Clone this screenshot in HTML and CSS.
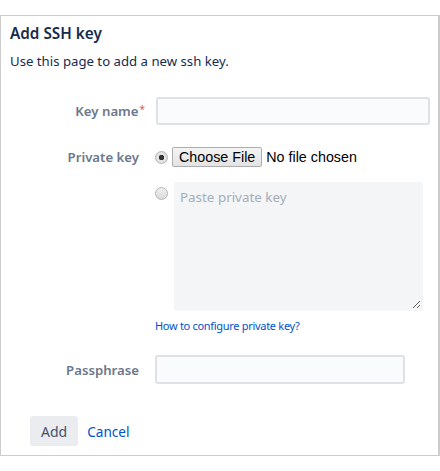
FILE: index.html
```html
<!DOCTYPE html>
<html lang="en">
<head>
  <meta charset="UTF-8">
  <title>Add SSH key</title>
  <link rel="stylesheet" href="styles.css">
</head>
<body>
<div class="panel">
  <h1 class="title">Add SSH key</h1>
  <p class="intro">Use this page to add a new ssh key.</p>
  <form class="ssh-form">
    <div class="row row-name">
      <label class="label" for="keyName">Key name<span class="req">*</span></label>
      <input class="text text-wide" id="keyName" type="text">
    </div>
    <div class="row row-file">
      <span class="label">Private key</span>
      <div class="choice">
        <input class="radio" type="radio" name="src" checked>
        <input class="file" type="file">
      </div>
    </div>
    <div class="row row-paste">
      <span></span>
      <div class="choice choice-paste">
        <input class="radio" type="radio" name="src">
        <textarea class="paste" placeholder="Paste private key"></textarea>
      </div>
    </div>
    <div class="row row-help">
      <span></span>
      <a class="help" href="#">How to configure private key?</a>
    </div>
    <div class="row row-pass">
      <label class="label" for="pass">Passphrase</label>
      <input class="text text-short" id="pass" type="password">
    </div>
    <div class="actions">
      <button class="btn" type="button">Add</button>
      <a class="cancel" href="#">Cancel</a>
    </div>
  </form>
</div>
</body>
</html>
```
FILE: styles.css
```css
body {
  margin: 0;
  padding-top: 15px;
  font-family: 'Noto Sans', sans-serif;
  color: #172b4d;
  background: #fff;
}
.panel {
  width: 440px;
  box-sizing: border-box;
  border: 1px solid #ccc;
  border-right-width: 2px;
  padding: 7px 10px 9px 9px;
}
.title {
  margin: 0;
  font-size: 15.3px;
  line-height: 20px;
  font-weight: 600;
}
.intro {
  margin: 8px 0 0;
  font-size: 13.2px;
  line-height: 20px;
}
.ssh-form {
  margin-top: 26px;
}
.row {
  display: grid;
  grid-template-columns: 135px 1fr;
  column-gap: 10px;
  align-items: center;
}
.label {
  text-align: right;
  padding-right: 6px;
  font-size: 13.2px;
  font-weight: 600;
  color: #6b778c;
}
.req {
  color: #e0613f;
  font-size: 10px;
  font-weight: 400;
  vertical-align: top;
  margin-right: -6px;
  margin-left: 1px;
}
.text {
  box-sizing: border-box;
  height: 28px;
  border: 2px solid #dfe1e6;
  border-radius: 3px;
  background: #fafbfc;
  font: inherit;
  font-size: 14px;
  padding: 0 6px;
}
.text-wide {
  width: 274px;
  margin-left: 1px;
}
.text-short {
  width: 250px;
  height: 29px;
}
.row-file {
  margin-top: 22px;
}
.row-paste {
  margin-top: 15px;
  align-items: start;
}
.row-help {
  margin-top: 7px;
}
.row-pass {
  margin-top: 21px;
}
.choice {
  display: flex;
  align-items: center;
  gap: 4px;
}
.choice-paste {
  align-items: flex-start;
}
.radio {
  appearance: none;
  width: 13px;
  height: 13px;
  margin: 0;
  border: 1px solid #b5b5b5;
  border-radius: 50%;
  background: linear-gradient(#f0f0f0, #dadada);
  box-sizing: border-box;
  flex-shrink: 0;
}
.radio:checked {
  background: radial-gradient(circle, #333 0, #333 2.5px, #e4e4e4 3px, #dcdcdc 100%);
}
.choice-paste .radio {
  margin-top: 5px;
}
.file {
  font-family: 'Liberation Sans', Arial, sans-serif;
  font-size: 14.3px;
  color: #000;
}
.file::file-selector-button {
  font: inherit;
  height: 20px;
  padding: 0 6px;
  margin-right: 4px;
  border: 1px solid #adadad;
  border-radius: 2px;
  background: linear-gradient(#f4f4f4, #e3e3e3);
  color: #000;
}
.paste {
  box-sizing: border-box;
  width: 249px;
  height: 129px;
  margin-left: 2px;
  border: 2px solid #f4f5f7;
  border-radius: 3px;
  background: #f4f5f7;
  font: inherit;
  font-size: 13.4px;
  padding: 4px 4px;
  resize: vertical;
}
.paste::placeholder {
  color: #a5adba;
}
.help {
  font-size: 11px;
  line-height: 16px;
  letter-spacing: -0.3px;
  color: #0052cc;
  text-decoration: none;
}
.actions {
  display: flex;
  align-items: center;
  gap: 9px;
  margin-top: 32px;
  padding-left: 20px;
}
.btn {
  height: 30px;
  padding: 0 11px;
  border: 0;
  border-radius: 3px;
  background: #ebecf0;
  color: #42526e;
  font: inherit;
  font-size: 14px;
}
.cancel {
  font-size: 13.6px;
  color: #0052cc;
  text-decoration: none;
}
```
